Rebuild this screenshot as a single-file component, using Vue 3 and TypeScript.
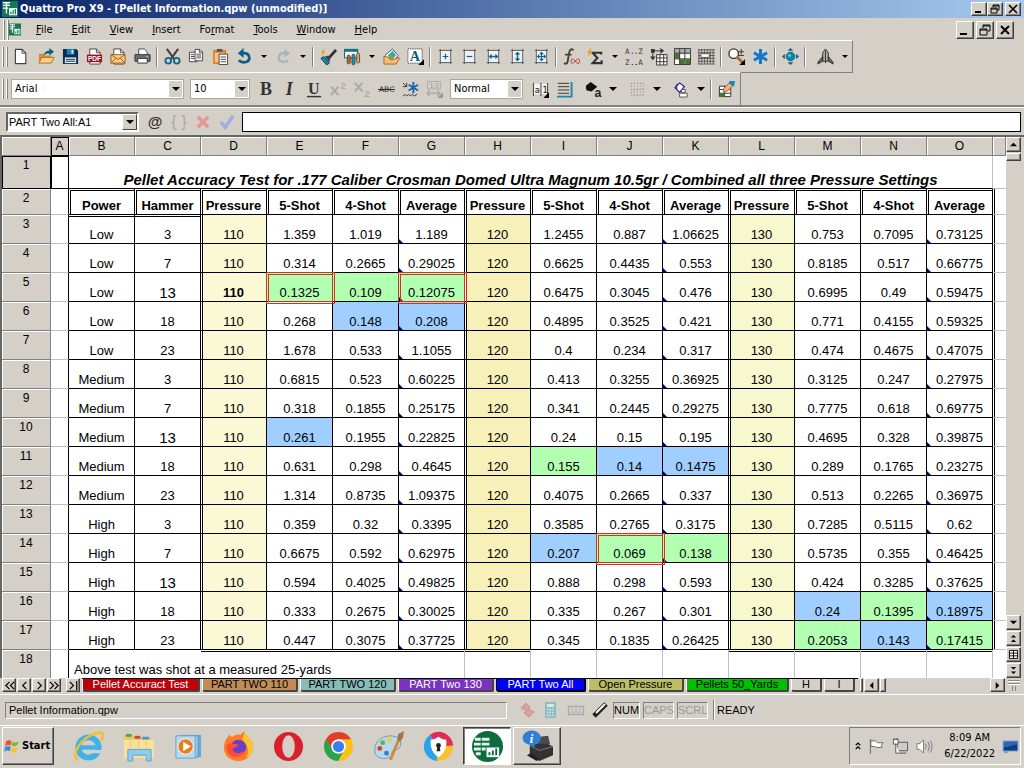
<script setup lang="ts">
import { ref } from 'vue'

interface Tool {
  kind: 'icon' | 'drop' | 'sep' | 'gap'
  icon?: string
  label?: string
}

const t = (icon: string, label: string): Tool => ({ kind: 'icon', icon, label })
const drop = (label: string): Tool => ({ kind: 'drop', label })
const sep: Tool = { kind: 'sep' }
const gap: Tool = { kind: 'gap' }

const box = '<rect x="3" y="3" width="12" height="12" fill="#eef2f4"/><path d="M3.500 1V17M14.500 1V17M2 2.500H16M2 15.500H16" stroke="#555" fill="none"/>'
const page = '<path d="M4 1h7l4 4v12H4z" fill="#fff" stroke="#444"/><path d="M11 1v4h4" fill="none" stroke="#444"/>'

const icons: Record<string, string> = {
  create: '<path d="M1.500 1.500h7l4 4v11h-11z" fill="#fff" stroke="#444" stroke-width="1.200"/><path d="M8.500 1.500v4h4" fill="none" stroke="#444"/>',
  open: '<path d="M1 16V6h5l1 2h7v8z" fill="#d98c2b"/><path d="M1 16l3-6h13l-3 6z" fill="#fbd08b" stroke="#b86f1c"/><path d="M6 8c1-4 3-5 6-5V0l5 4-5 4V6c-2-.5-4 0-6 2z" fill="#0f5f85"/>',
  save: '<path d="M1 1h14l2 2v14H1z" fill="#0a2c50"/><rect x="5" y="1" width="8" height="6" fill="#1684b5"/><rect x="10" y="2" width="2" height="4" fill="#cfe6f2"/><rect x="3" y="10" width="12" height="6" fill="#e8f0f4"/><path d="M4 12h10M4 14h10" stroke="#0a2c50"/>',
  pdf: page + '<rect x="1" y="7" width="16" height="8" fill="#9c0f1c"/><text x="2" y="14" font-size="7" font-weight="700" font-family="Liberation Sans,sans-serif" fill="#fff">PDF</text>',
  mail: page + '<path d="M1 7h15v9H1z" fill="#f8c987" stroke="#9d5b17"/><path d="M1 7l7.500 5L16 7M1 16l5-5M16 16l-5-5" fill="none" stroke="#9d5b17"/>',
  print: '<path d="M5 8V1h6l3 3v4" fill="#fff" stroke="#444"/><path d="M1 7h16v7H1z" fill="#66737a" stroke="#333"/><path d="M4 11h10v5H4z" fill="#fff" stroke="#333"/><path d="M13 9h2" stroke="#7bf27b" stroke-width="1.500"/>',
  cut: '<path d="M3 1l8 11M15 1L7 12" stroke="#444" stroke-width="2.200"/><circle cx="4.500" cy="13.500" r="3" fill="none" stroke="#14638c" stroke-width="2"/><circle cx="13.500" cy="13.500" r="3" fill="none" stroke="#14638c" stroke-width="2"/>',
  copy: '<path d="M1.500 4.500h8v10h-8z" fill="#fff" stroke="#444"/><path d="M3 7h4M3 9h4M3 11h4" stroke="#444"/><path d="M7.500 1.500h5l3 3v9h-8z" fill="#fff" stroke="#444"/><path d="M12 1.500v3h3.500M9 6.500h5M9 8.500h5M9 10.500h5" stroke="#444" fill="none"/>',
  paste: '<path d="M1 2h14v15H1z" fill="#e0872c"/><path d="M5 1h6v3H5z" fill="#555"/><path d="M3 5h10v10H3z" fill="#f6c38a"/><path d="M7.500 6.500h9v11h-9z" fill="#fff" stroke="#444"/><path d="M9 9.500h6M9 12h6M9 14.500h6" stroke="#444"/>',
  undo: '<path d="M3 13c4 4 12 2 11-3.500C13.500 6 10 5 6 5.500" fill="none" stroke="#0f5d85" stroke-width="3"/><path d="M8 0L2 5.500l6 5z" fill="#0f5d85"/>',
  redo: '<path d="M14 13c-3 3-11 2-10-3.500C5 6 8 5 11 5.500" fill="none" stroke="#aab4b8" stroke-width="2.500"/><path d="M10 1l6 4.500-6 4.500z" fill="#aab4b8"/>',
  brush: '<path d="M17 2L9 11" stroke="#333" stroke-width="3"/><path d="M4 9l6 7-3 2-6-7z" fill="#1c87ad" stroke="#0a425b"/><path d="M5 9l4-1 2 3-1 4z" fill="#444"/><path d="M5 0L1 5h2L1 9l5-5H4z" fill="#f29b1c"/>',
  chart: '<path d="M.5 1.500h14v9H.5z" fill="#f6fafb" stroke="#0f5566"/><rect x="0" y="1" width="15" height="3" fill="#167386"/><path d="M3.500 9c0-2 3-2 3 0v7c-1 1-2 1-3 0z" fill="#d4661c" stroke="#444"/><path d="M8.500 8c0-2 3-2 3 0v9c-1 1-2 1-3 0z" fill="#1d9aac" stroke="#444"/><path d="M13.500 7c0-2 3-2 3 0v8c-1 1-2 1-3 0z" fill="#f4b25a" stroke="#444"/>',
  picture: '<path d="M2 8l8-7 6 7-6 7z" fill="#fff" stroke="#285a6b"/><path d="M5 8l5-5 4 5-4 4z" fill="#3aa4b8"/><path d="M5 10l3-3 4 4-4 2z" fill="#67b82e"/><path d="M1 17V9h3l5 4 8-3v2l-3 5z" fill="#f6bb76" stroke="#af6517"/>',
  textbox: '<rect x="1" y="1" width="15" height="15" fill="#fff" stroke="#222" stroke-dasharray="1 1"/><text x="3" y="14" font-size="15" font-weight="700" font-family="Liberation Serif,serif" fill="#0b5b86">A</text><path d="M18 12v6h-6z" fill="#000"/>',
  insert: box + '<path d="M9 6v6M6 9h6" stroke="#086089" stroke-width="1.300"/>',
  remove: box + '<path d="M6 9h6" stroke="#086089" stroke-width="1.300"/>',
  fitWidth: box + '<path d="M5 9h8" stroke="#086089" stroke-width="1.500"/><path d="M7 6L4 9l3 3zM11 6l3 3-3 3z" fill="#086089"/>',
  fitHeight: box + '<path d="M9 5v8" stroke="#086089" stroke-width="1.500"/><path d="M6 7l3-3 3 3zM6 11l3 3 3-3z" fill="#086089"/>',
  fitBoth: box + '<path d="M9 5v8M5 9h8" stroke="#086089" stroke-width="1.300"/><path d="M6.500 6.500L9 4l2.500 2.500zM6.500 11.500L9 14l2.500-2.500zM6.500 6.500L4 9l2.500 2.500zM11.500 6.500L14 9l-2.500 2.500z" fill="#086089"/>',
  formula: '<path d="M11 2.500C9 0 7 2 6.500 5L5 14c-.5 3-2.500 3-4 2M2 7h7" stroke="#444" stroke-width="2" fill="none"/><path d="M10 11c-2 2-2 4 0 6M16 11c2 2 2 4 0 6M10.500 11.500l5 5M15.500 11.500l-5 5" stroke="#c92b2b" fill="none"/>',
  sum: '<path d="M15 7V5H6l5 5.500L6 16h9.500v-3" fill="none" stroke="#333" stroke-width="2.300"/><path d="M4 0L0 5h2L1 9l5-5H4z" fill="#f2a01c"/>',
  sort: '<g font-family="DejaVu Sans Mono,monospace" font-size="8" fill="#333"><text x="-1" y="6">A</text><text x="13" y="6">Z</text><text x="-1" y="18">Z</text><text x="13" y="18">A</text></g><path d="M6 5.500h1.500M10 5.500h1.500M6 17.500h1.500M10 17.500h1.500" stroke="#333"/>',
  transpose: '<path d="M3 2v9M3 3h9" stroke="#333" fill="none"/><path d="M0 9l3 4 3-4zM11 0l4 3-4 3zM1 1h4v4H1z" fill="#333"/><path d="M7 7h11v11H7z" fill="#fff" stroke="#333"/><path d="M7 10.500h11M7 14.500h11M10.500 7v11M14.500 7v11" stroke="#333"/>',
  colors: '<path d="M.5.500h17v17H.5z" fill="#fff" stroke="#333"/><path d="M1 1h16v5H1z" fill="#a9adab"/><path d="M1 6h5v5H1zM6 12h5v5H6zM12 12h5v5h-5z" fill="#48752a"/><path d="M6 .5v17M11.500.500v17M.5 5.500h17M.5 11.500h17" stroke="#333"/>',
  grid: '<path d="M1 1v16M4 1v16M7 1v16M10 1v16M13 1v16M16 1v16M0 2h18M0 5h18M0 8h18M0 11h18M0 14h18M0 17h18" stroke="#444" stroke-width=".8"/><path d="M3 6h9v4H3z" fill="#fff" stroke="#555"/>',
  zoom: '<circle cx="6" cy="6" r="5" fill="#fff" stroke="#333" stroke-width="1.400"/><path d="M9 9l7 7" stroke="#b36b2b" stroke-width="3"/><path d="M14 1v6M11 4h6M11 8h6" stroke="#333"/><path d="M18 12v6h-6z" fill="#000"/>',
  star: '<path d="M9 1v16M2 5l14 8M16 5L2 13" stroke="#1478c8" stroke-width="3.200"/>',
  navigate: '<circle cx="9" cy="9" r="4.500" fill="#0e86ad" stroke="#0b5f80"/><circle cx="8" cy="8" r="1.500" fill="#6cd0e6"/><path d="M6 3l3-3 3 3zM6 15l3 3 3-3zM3 6L0 9l3 3zM15 6l3 3-3 3z" fill="#0d5f7d"/>',
  rocket: '<path d="M6 14V5l3-4 3 4v9z" fill="#aaa" stroke="#333"/><path d="M6 9l-5 6v2l5-3zM12 9l5 6v2l-5-3z" fill="#666" stroke="#333"/><path d="M9 3v13" stroke="#333"/>',
  bold: '<text x="2" y="15" font-size="19" font-weight="700" font-family="Liberation Serif,serif" fill="#333">B</text>',
  italic: '<text x="4" y="15" font-size="19" font-weight="700" font-style="italic" font-family="Liberation Serif,serif" fill="#333">I</text>',
  underline: '<text x="2" y="14" font-size="17" font-weight="700" font-family="Liberation Serif,serif" fill="#333">U</text><path d="M1 16.500h15" stroke="#333" stroke-width="1.500"/>',
  superscript: '<path d="M1 6l8 9M9 6l-8 9" stroke="#aaa" stroke-width="2.200"/><text x="11" y="8" font-size="10" font-weight="700" font-family="Liberation Sans,sans-serif" fill="#aaa">2</text>',
  subscript: '<path d="M1 2l8 9M9 2l-8 9" stroke="#aaa" stroke-width="2.200"/><text x="11" y="17" font-size="10" font-weight="700" font-family="Liberation Sans,sans-serif" fill="#aaa">2</text>',
  strike: '<text x="1" y="12" font-size="8" font-family="DejaVu Sans,sans-serif" fill="#222">ABC</text><path d="M0 9h18" stroke="#222"/>',
  quick: '<path d="M12 1v12M7 4l10 6M17 4L7 10" stroke="#1766ad" stroke-width="2"/><path d="M1 2l4 4M5 2v4H1" stroke="#333" fill="none"/><path d="M1 16l2-2 2 2 2-2 2 2 2-2 2 2 3-2" stroke="#333" fill="none"/>',
  decimals: '<path d="M1.500.500h14v8h-14z" fill="none" stroke="#aaa"/><text x="4" y="7" font-size="7" font-family="Liberation Sans,sans-serif" fill="#999">1.0</text><path d="M1 13h14M4 10l-3 3 3 3M12 10l3 3-3 3" fill="none" stroke="#aaa" stroke-width="1.500"/><path d="M18 12v6h-6z" fill="#999"/>',
  align: '<rect x="2" y="3" width="15" height="11" fill="#f4f4f4"/><path d="M1.500 2v14M9.500 2v14M16.500 2v12" stroke="#333" fill="none"/><text x="3" y="13" font-size="9" font-family="DejaVu Sans,sans-serif" fill="#111">a</text><text x="11" y="13" font-size="9" font-family="DejaVu Sans,sans-serif" fill="#111">1</text><path d="M18 12v6h-6z" fill="#000"/>',
  lines: '<path d="M2 2.500h12M2 6h12M2 9.500h12M2 13h12" stroke="#333"/><path d="M16.500 1v15.500H1" stroke="#148aac" stroke-width="2" fill="none"/>',
  fill: '<path d="M1 5l5-4 7 5-6 5-5-1z" fill="#111"/><path d="M1 5v5l2-4z" fill="#111"/><text x="10" y="17" font-size="13" font-weight="700" font-family="Liberation Sans,sans-serif" fill="#222">a</text>',
  borders: '<path d="M2.500 2.500h13v13h-13zM9 2v14M2 9h14M5.500 2v14M12.500 2v14" stroke="#888" stroke-dasharray="1 2" fill="none"/>',
  shapeFill: '<path d="M2 7l5-5 5 4-5 6z" fill="#fff" stroke="#14148a" stroke-width="1.200"/><path d="M4 3v6" stroke="#14148a"/><path d="M9 9h4v3H9zM7 13h8v4H7z" fill="#fff" stroke="#555"/>',
  styleBrush: '<path d="M1.500 5.500h12v11h-12z" fill="#fff" stroke="#333"/><path d="M1 9h12M1 13h12M7 5v12" stroke="#333"/><path d="M2 13h5v4H2z" fill="#48752a"/><path d="M6 8l6-6 4 2-5 6-5 2z" fill="#efb281" stroke="#a85f2c"/><path d="M12 0h6l-1 6-5-3z" fill="#148aac"/>',
  appLogo: '<rect width="18" height="18" fill="#0e7b50"/><path d="M1 2h8M1 5h8M1 8h6M5 1v13" stroke="#fff" stroke-width="1.500"/><path d="M8 8h9v8H8z" fill="#fff"/><path d="M10 15v-3M12.500 15v-5M15 15V9" stroke="#0e7b50" stroke-width="1.400"/>',
}

const standardTools: Tool[] = [
  t('create', 'New'), t('open', 'Open'), t('save', 'Save'), t('pdf', 'Publish to PDF'), t('mail', 'Send'), t('print', 'Print'), sep,
  t('cut', 'Cut'), t('copy', 'Copy'), t('paste', 'Paste'), t('undo', 'Undo'), drop('Undo list'), t('redo', 'Redo'), drop('Redo list'), sep,
  t('brush', 'QuickFormat'), t('chart', 'Chart'), drop('Chart types'), t('picture', 'Insert picture'), t('textbox', 'Text box'), sep,
  t('insert', 'Insert cells'), t('remove', 'Delete cells'), t('fitWidth', 'Fit width'), t('fitHeight', 'Fit height'), t('fitBoth', 'Fit both'), sep,
  t('formula', 'Formula composer'), t('sum', 'QuickSum'), drop('QuickSum list'), t('sort', 'Sort'), t('transpose', 'Transpose'), t('colors', 'SpeedFormat'), t('grid', 'Grid'), sep,
  t('zoom', 'Zoom'), t('star', 'Perfect Expert'), sep, t('navigate', 'Navigate'), sep, gap, t('rocket', 'Launcher'), drop('Launcher list'),
]
const fontTools: Tool[] = [
  t('bold', 'Bold'), t('italic', 'Italic'), t('underline', 'Underline'), t('superscript', 'Superscript'),
  t('subscript', 'Subscript'), t('strike', 'Strikethrough'), t('quick', 'QuickStyle'), t('decimals', 'Decimals'),
]
const cellTools: Tool[] = [
  t('align', 'Align'), t('lines', 'Lines'), gap, t('fill', 'Fill color'), drop('Fill colors'), gap, t('borders', 'Borders'), drop('Border list'), gap,
  t('shapeFill', 'Shape fill'), drop('Shape fills'), sep, t('styleBrush', 'Format brush'),
]

const menus = [
  ['', 'F', 'ile'], ['', 'E', 'dit'], ['', 'V', 'iew'], ['', 'I', 'nsert'], ['Fo', 'r', 'mat'], ['', 'T', 'ools'], ['', 'W', 'indow'], ['', 'H', 'elp'],
]

const letters = 'ABCDEFGHIJKLMNO'.split('')
const headings = ['Power', 'Hammer', 'Pressure', '5-Shot', '4-Shot', 'Average', 'Pressure', '5-Shot', '4-Shot', 'Average', 'Pressure', '5-Shot', '4-Shot', 'Average']
const power = ['Low', 'Medium', 'High']
const hammer = ['3', '7', '13', '18', '23']
const shots = [
  '1.359 1.019 1.189 1.2455 0.887 1.06625 0.753 0.7095 0.73125',
  '0.314 0.2665 0.29025 0.6625 0.4435 0.553 0.8185 0.517 0.66775',
  '0.1325 0.109 0.12075 0.6475 0.3045 0.476 0.6995 0.49 0.59475',
  '0.268 0.148 0.208 0.4895 0.3525 0.421 0.771 0.4155 0.59325',
  '1.678 0.533 1.1055 0.4 0.234 0.317 0.474 0.4675 0.47075',
  '0.6815 0.523 0.60225 0.413 0.3255 0.36925 0.3125 0.247 0.27975',
  '0.318 0.1855 0.25175 0.341 0.2445 0.29275 0.7775 0.618 0.69775',
  '0.261 0.1955 0.22825 0.24 0.15 0.195 0.4695 0.328 0.39875',
  '0.631 0.298 0.4645 0.155 0.14 0.1475 0.289 0.1765 0.23275',
  '1.314 0.8735 1.09375 0.4075 0.2665 0.337 0.513 0.2265 0.36975',
  '0.359 0.32 0.3395 0.3585 0.2765 0.3175 0.7285 0.5115 0.62',
  '0.6675 0.592 0.62975 0.207 0.069 0.138 0.5735 0.355 0.46425',
  '0.594 0.4025 0.49825 0.888 0.298 0.593 0.424 0.3285 0.37625',
  '0.333 0.2675 0.30025 0.335 0.267 0.301 0.24 0.1395 0.18975',
  '0.447 0.3075 0.37725 0.345 0.1835 0.26425 0.2053 0.143 0.17415',
]
const rows = shots.map((line, i) => {
  const s = line.split(' ')
  return {
    n: i + 3,
    cells: [power[Math.floor(i / 5)], hammer[i % 5], '110', ...s.slice(0, 3), '120', ...s.slice(3, 6), '130', ...s.slice(6, 9)],
  }
})

const green = ['E5', 'F5', 'G5', 'I11', 'J14', 'K14', 'N16', 'M17', 'O17']
const blue = ['F6', 'G6', 'E10', 'J11', 'K11', 'I14', 'M16', 'O16', 'N17']
const ringed = ['E5', 'G5', 'J14']
const large = ['C5', 'C10', 'C15']

function cellClass(col: number, row: number) {
  const letter = letters[col + 1]
  const ref = letter + row
  return {
    ['p' + letter]: 'DHL'.includes(letter),
    split: 'DHL'.includes(letter),
    under: row === 3 && col < 2,
    calc: 'GKO'.includes(letter),
    green: green.includes(ref),
    blue: blue.includes(ref),
    ringed: ringed.includes(ref),
    large: large.includes(ref),
    strong: ref === 'D5',
  }
}

const tabs = [
  { name: 'Pellet Accuract Test', tone: 'red', w: 'w118' },
  { name: 'PART TWO 110', tone: 'tan', w: 'w96' },
  { name: 'PART TWO 120', tone: 'teal', w: 'w96' },
  { name: 'PART Two 130', tone: 'violet', w: 'w96' },
  { name: 'PART Two All', tone: 'active', w: 'w90' },
  { name: 'Open Pressure', tone: 'olive', w: 'w96' },
  { name: 'Pellets 50_Yards', tone: 'lime', w: 'w103' },
  { name: 'H', tone: 'plain', w: 'w31' },
  { name: 'I', tone: 'plain', w: 'w31' },
]
const tabNav = [
  { label: 'First sheets', d: 'M6 2L2 6l4 4M11 2L7 6l4 4' },
  { label: 'Previous sheet', d: 'M8 2L4 6l4 4' },
  { label: 'Next sheet', d: 'M4 2l4 4-4 4' },
  { label: 'Last sheets', d: 'M1 2l4 4-4 4M6 2l4 4-4 4' },
  { label: 'Last tab', d: 'M2 2l4 4-4 4M9.500 1v10' },
]

const taskApps: { name: string; svg: string; state?: string }[] = [
  { name: 'Internet Explorer', svg: '<circle cx="16" cy="17" r="10.500" fill="none" stroke="#3fb2ea" stroke-width="6"/><path d="M8 17h18" stroke="#3fb2ea" stroke-width="4.500"/><path d="M20 19.500h11v3.500H18z" fill="#d4d0c8"/><path d="M5 30C-2 25 6 12 17 5c7-4 14-5 14-1 0 2-1 4-2 6" fill="none" stroke="#f3c02c" stroke-width="2.500"/>' },
  { name: 'Explorer', svg: '<path d="M1 4h10l2 3h17v21H1z" fill="#e6c76a"/><path d="M3 3h6v3H3z" fill="#4ea84e"/><path d="M12 5h6v3h-6z" fill="#c94e3a"/><path d="M20 6h7v3h-7z" fill="#4a8fd0"/><path d="M1 9h31v19H1z" fill="#f8e29a"/><path d="M8 9v11M16 9v10M24 9v11" stroke="#e9cd7b"/><path d="M5 31V19h24v12h-5v-6H10v6z" fill="#8fcbee" stroke="#5fa5d2"/>' },
  { name: 'Media Player', svg: '<path d="M9 4h20v23H9z" fill="#6ba8d4"/><path d="M6 5h20v22H6z" fill="#9ccbe8" stroke="#5a95c2"/><path d="M3 5h20v23H3z" fill="#b5d9f0" stroke="#6aa3cc"/><circle cx="13" cy="16" r="8" fill="#ee7b1c" stroke="#fff"/><path d="M10.500 11l8 5-8 5z" fill="#fff"/>' },
  { name: 'Firefox', svg: '<path d="M3 9c2-3 3-5 4-6 0 2 1 3 3 3 2-2 5-3 8-2 1-1 2-2 4-4 1 6 8 7 9 15 0 9-6 16-15 16S1 25 1 17c0-3 1-6 2-8z" fill="#ff7b25"/><path d="M22 1c2 5 9 8 9 15 0 6-3 10-7 12 4-7 1-15-4-19z" fill="#ffc62b"/><circle cx="16" cy="17" r="8" fill="#6a3fc8"/><path d="M4 14c5-3 7 0 12 0-1 4-6 2-6 6 3 4 9 3 12 0-2 9-15 9-18 0z" fill="#ff4b3a"/>' },
  { name: 'Opera', svg: '<ellipse cx="16" cy="16" rx="15" ry="15" fill="#d9202c"/><ellipse cx="16" cy="16" rx="6.500" ry="11.500" fill="#d4d0c8"/>' },
  { name: 'Chrome', svg: '<circle cx="16" cy="16" r="15" fill="#fbc116"/><path d="M16 16L9 12 3 8.500A15 15 0 0 0 15.500 31L22 19.500z" fill="#2ba24c"/><path d="M3 8.500A15 15 0 0 1 29 8.500H16L10 18z" fill="#e33b2e"/><circle cx="16" cy="16" r="7.500" fill="#fff"/><circle cx="16" cy="16" r="5.800" fill="#3b7ded"/>' },
  { name: 'Paint', svg: '<path d="M2 22C0 13 8 5 18 5c9 0 12 6 10 11-1 3-5 3-7 4-3 2 0 5-4 7-6 3-14 1-15-5z" fill="#b9d8ea" stroke="#6d9ab5"/><circle cx="7" cy="18" r="2.500" fill="#d64031"/><circle cx="10" cy="12" r="2.500" fill="#6bb341"/><circle cx="17" cy="9" r="2.500" fill="#f3ce3a"/><circle cx="14" cy="23" r="2.500" fill="#4178c4"/><path d="M18 30L27 8" stroke="#dc8637" stroke-width="3"/><path d="M25 9l1-6 6-3-1 7-3 4z" fill="#a97342"/>' },
  { name: 'Secure Browser', svg: '<circle cx="16" cy="16" r="15" fill="#fbc02d"/><path d="M16 16L7 4A15 15 0 0 1 31 15z" fill="#e02b56"/><path d="M16 16L7 4A15 15 0 0 0 14 31z" fill="#27a3f0"/><path d="M16 6c3 2 5 3 8 3 1 8-2 14-8 18-6-4-9-10-8-18 3 0 5-1 8-3z" fill="#fff"/><circle cx="16" cy="15" r="2.500" fill="#222"/><path d="M15 15h2l1 6h-4z" fill="#222"/>' },
  { name: 'Quattro Pro', state: 'pressed', svg: '<circle cx="16" cy="16" r="16" fill="#0c6b3f"/><path d="M3 7h6v3H3zM10 7h8v3h-8zM2 12h7v3H2zM10 12h8v3h-8zM2 17h7v3H2zM10 17h4v3h-4zM4 22h5v3H4z" fill="#e4f3ea"/><path d="M15 17h13v10H15z" fill="#fff"/><path d="M18 25v-3M21.500 25v-5M25 25v-7" stroke="#0c6b3f" stroke-width="2"/>' },
  { name: 'Printer', state: 'raised', svg: '<path d="M8 15l14-4 10 5v9l-14 6-10-5z" fill="#333"/><path d="M16 13l2-7 9-1 2 9z" fill="#4a4a4a"/><path d="M8 15l10 5 14-4" fill="none" stroke="#777"/><path d="M5 25l10 6 3-2-9-6z" fill="#222"/><ellipse cx="10" cy="7" rx="9.500" ry="7.500" fill="#2f7fd6"/><path d="M9 12l3 6 2-7z" fill="#2f7fd6"/><text x="8" y="12" font-size="13" font-style="italic" font-weight="700" font-family="Liberation Serif,serif" fill="#fff">i</text>' },
]

const font = ref('Arial')
const size = ref('10')
const style = ref('Normal')
const cell = ref('PART Two All:A1')
const formula = ref('')
</script>

<template>
  <div class="desk">
    <header class="title-bar">
      <svg class="logo" viewBox="0 0 18 18" v-html="icons.appLogo"></svg>
      <h1>Quattro Pro X9 - [Pellet Information.qpw (unmodified)]</h1>
      <div class="win-buttons">
        <button class="win" aria-label="Minimize"><svg viewBox="0 0 12 10"><path d="M2 8h6" stroke="#000" stroke-width="2" /></svg></button>
        <button class="win" aria-label="Restore"><svg viewBox="0 0 12 10"><path d="M4 1h6v5H8M4 1v2M4 2h6M2 4h6v5H2zM2 5h6" fill="none" stroke="#000" /></svg></button>
        <button class="win last" aria-label="Close"><svg viewBox="0 0 12 10"><path d="M2 1l8 8M10 1L2 9" stroke="#000" stroke-width="1.600" /></svg></button>
      </div>
    </header>

    <nav class="menu-bar">
      <i class="grip"></i>
      <svg class="logo doc" viewBox="0 0 18 18" v-html="icons.appLogo"></svg>
      <button v-for="m in menus" :key="m[1] + m[2]" class="menu">{{ m[0] }}<u>{{ m[1] }}</u>{{ m[2] }}</button>
      <div class="win-buttons mdi">
        <button class="win" aria-label="Minimize sheet"><svg viewBox="0 0 12 12"><path d="M1 10h7" stroke="#000" stroke-width="2" /></svg></button>
        <button class="win" aria-label="Restore sheet"><svg viewBox="0 0 12 12"><path d="M4 1h7v6H9M4 1v3M4 2h7M1 5h7v6H1zM1 6h7" fill="none" stroke="#000" /></svg></button>
        <button class="win" aria-label="Close sheet"><svg viewBox="0 0 12 12"><path d="M2 2l8 8M10 2l-8 8" stroke="#000" stroke-width="2" /></svg></button>
      </div>
    </nav>

    <div class="tool-row">
      <div class="toolbar">
        <i class="grip"></i>
        <template v-for="(tool, i) in standardTools" :key="i">
          <button v-if="tool.kind === 'icon'" class="tool" :aria-label="tool.label"><svg viewBox="0 0 18 18" v-html="icons[tool.icon!]"></svg></button>
          <button v-else-if="tool.kind === 'drop'" class="caret" :aria-label="tool.label"></button>
          <i v-else :class="tool.kind"></i>
        </template>
      </div>
    </div>

    <div class="tool-row second">
      <div class="toolbar">
        <i class="grip"></i>
        <span class="combo font"><select v-model="font" aria-label="Font"><option>Arial</option></select><i></i></span>
        <span class="combo size"><select v-model="size" aria-label="Font size"><option>10</option></select><i></i></span>
        <button v-for="tool in fontTools" :key="tool.icon" class="tool" :aria-label="tool.label"><svg viewBox="0 0 18 18" v-html="icons[tool.icon!]"></svg></button>
        <span class="combo style"><select v-model="style" aria-label="Style"><option>Normal</option></select><i></i></span>
        <template v-for="(tool, i) in cellTools" :key="i">
          <button v-if="tool.kind === 'icon'" class="tool" :aria-label="tool.label"><svg viewBox="0 0 18 18" v-html="icons[tool.icon!]"></svg></button>
          <button v-else-if="tool.kind === 'drop'" class="caret wide" :aria-label="tool.label"></button>
          <i v-else :class="tool.kind"></i>
        </template>
      </div>
    </div>

    <div class="formula-bar">
      <span class="combo cell"><select v-model="cell" aria-label="Cell address"><option>PART Two All:A1</option></select><i></i></span>
      <button class="fx at" aria-label="Functions">@</button>
      <button class="fx brace" aria-label="Macros">{ }</button>
      <button class="fx" aria-label="Cancel"><svg viewBox="0 0 18 18"><path d="M3 3l12 12M15 3L3 15" stroke="#e39a94" stroke-width="4" /></svg></button>
      <button class="fx" aria-label="Accept"><svg viewBox="0 0 18 18"><path d="M2 9l5 6L16 2" fill="none" stroke="#a3afd8" stroke-width="4" /></svg></button>
      <input v-model="formula" type="text" aria-label="Cell contents" />
    </div>

    <main class="sheet">
      <div class="grid-area">
        <table>
          <colgroup>
            <col class="c-num" /><col class="c-a" /><col v-for="n in 14" :key="n" class="c-data" /><col />
          </colgroup>
          <thead>
            <tr>
              <th></th>
              <th v-for="l in letters" :key="l" :class="{ current: l === 'A' }">{{ l }}</th>
              <th></th>
            </tr>
          </thead>
          <tbody>
            <tr class="first">
              <th class="current">1</th>
              <td class="cursor"></td>
              <td colspan="14" class="caption">Pellet Accuracy Test for .177 Caliber Crosman Domed Ultra Magnum 10.5gr / Combined all three Pressure Settings</td>
              <td class="free"></td>
            </tr>
            <tr class="heads">
              <th>2</th>
              <td class="edge"></td>
              <td v-for="(h, i) in headings" :key="i" class="head">{{ h }}</td>
              <td class="free close"></td>
            </tr>
            <tr v-for="r in rows" :key="r.n">
              <th>{{ r.n }}</th>
              <td class="edge"></td>
              <td v-for="(c, i) in r.cells" :key="i" :class="cellClass(i, r.n)">{{ c }}</td>
              <td class="free close"></td>
            </tr>
            <tr>
              <th>18</th>
              <td class="edge"></td>
              <td colspan="2" class="note">Above test was shot at a measured 25-yards</td>
              <td colspan="4" class="free under"></td>
              <td class="free under"></td>
              <td v-for="n in 3" :key="n" class="free"></td>
              <td v-for="n in 4" :key="'b' + n" class="free under"></td>
              <td class="free"></td>
            </tr>
          </tbody>
        </table>
      </div>
      <div class="vscroll">
        <button class="sb" aria-label="Scroll up"><svg viewBox="0 0 10 10"><path d="M1 7l4-4 4 4z" /></svg></button>
        <span class="thumb"></span>
        <span class="track"></span>
        <button class="sb" aria-label="Scroll down"><svg viewBox="0 0 10 10"><path d="M1 3l4 4 4-4z" /></svg></button>
        <button class="sb" aria-label="Page up"><svg viewBox="0 0 10 10"><path d="M2 4l3-3 3 3zM2 9l3-3 3 3z" /></svg></button>
        <button class="sb" aria-label="Browse by"><svg viewBox="0 0 10 10"><path d="M.5.500h9v9h-9zM.5 3.500h9M.5 6.500h9M5 0v10" fill="#fff" stroke="#000" /></svg></button>
        <button class="sb" aria-label="Page down"><svg viewBox="0 0 10 10"><path d="M2 1l3 3 3-3zM2 6l3 3 3-3z" /></svg></button>
      </div>
    </main>

    <div class="tab-row">
      <div class="tab-nav">
        <button v-for="b in tabNav" :key="b.label" class="sb" :aria-label="b.label"><svg viewBox="0 0 12 12"><path :d="b.d" fill="none" stroke="#000" stroke-width="1.300" /></svg></button>
      </div>
      <div class="tabs">
        <button v-for="tab in tabs" :key="tab.name" class="tab" :class="[tab.tone, tab.w]">{{ tab.name }}</button>
      </div>
      <div class="hscroll">
        <span class="thumb slim"></span>
        <button class="sb" aria-label="Scroll left"><svg viewBox="0 0 10 10"><path d="M7 1L3 5l4 4z" /></svg></button>
        <span class="thumb"></span>
        <span class="track"></span>
        <button class="sb" aria-label="Scroll right"><svg viewBox="0 0 10 10"><path d="M3 1l4 4-4 4z" /></svg></button>
      </div>
      <svg class="corner" viewBox="0 0 14 14"><path d="M1 2.500h12M1 5.500h12M5.500 8v5M8.500 8v5" stroke="#888" /><path d="M1 3.500h12M1 6.500h12" stroke="#fff" /></svg>
    </div>

    <footer class="status">
      <span class="file">Pellet Information.qpw</span>
      <svg viewBox="0 0 16 16"><path d="M1 6l5-5 4 4-2 2 6 3-5 5-5-4 3-2z" fill="#d9a39f" stroke="#cf8d88" /></svg>
      <svg viewBox="0 0 16 16"><path d="M3 0h11v16H3z" fill="#8fbcc4" /><path d="M5 2h7v3H5z" fill="#d6e8ea" /><path d="M5 7.500h7M5 10.500h7M5 13.500h7" stroke="#d6e8ea" stroke-width="1.500" stroke-dasharray="1.500 1" /></svg>
      <svg class="wide" viewBox="0 0 18 16"><path d="M1.500 4.500h15v8h-15z" fill="none" stroke="#aaa" stroke-width="1.500" /><path d="M4 7.500h2M8 7.500h2M12 7.500h2M4 10h10" stroke="#aaa" /></svg>
      <svg viewBox="0 0 16 16"><path d="M2 14L14 2" stroke="#222" stroke-width="5" /><path d="M4 11l9-9" stroke="#fff" stroke-width="2" /></svg>
      <span class="key on">NUM</span><span class="key">CAPS</span><span class="key">SCRL</span>
      <i class="sep"></i>
      <span class="ready">READY</span>
    </footer>

    <div class="taskbar">
      <button class="start">
        <svg viewBox="0 0 16 16"><path d="M1 3c2-2 4-2 6-1L6 7C4 6 2 6 0 8z" fill="#e8542a" /><path d="M8 3c2 1 4 1 7-1l-2 5c-2 1-4 1-6 0z" fill="#7ebb2e" /><path d="M0 9c2-2 4-1 6-1l-1 5c-2-1-4-1-6 1z" fill="#3a86d8" /><path d="M7 9c2 1 4 1 6 0l-1 5c-2 1-4 1-6-1z" fill="#f7c428" /></svg>
        Start
      </button>
      <button v-for="a in taskApps" :key="a.name" class="app" :class="a.state" :aria-label="a.name"><svg viewBox="0 0 32 32" v-html="a.svg"></svg></button>
      <div class="tray">
        <svg class="small" viewBox="0 0 8 12"><path d="M1 5l3-3 3 3M1 10l3-3 3 3" fill="none" stroke="#000" stroke-width="1.500" /></svg>
        <svg viewBox="0 0 18 18"><path d="M2.500 1v16M3 3h5l2 2h6l-2 3 1 2H9L7 9H3z" fill="#fff" stroke="#666" /></svg>
        <svg viewBox="0 0 18 18"><path d="M5.500 4.500h11v9h-11zM8 16h7" fill="#ccc" stroke="#555" /><path d="M1.500 1.500h5v5h-5zM4 6v10h4M2.500 0v2M5.500 0v2" fill="#fff" stroke="#555" /></svg>
        <svg viewBox="0 0 18 18"><path d="M1 6h3l4-4v14l-4-4H1z" fill="#fff" stroke="#777" /><path d="M10 6c1 2 1 4 0 6M12.500 4c2 3 2 7 0 10M15 2.500c2.500 4 2.500 9 0 13" fill="none" stroke="#777" /></svg>
        <time>8:09 AM<br />6/22/2022</time>
        <svg viewBox="0 0 18 18"><path d="M1 3h16v11H1z" fill="#2b67b8" stroke="#9ab8d8" /><path d="M2 10c5 0 9-3 14-3v6H2z" fill="#123c7c" /><path d="M2 14h4v2H2z" fill="#66a8d8" /></svg>
      </div>
    </div>
  </div>
</template>

<style>
body { margin: 0; background: #fff; }
</style>

<style scoped>
* { box-sizing: border-box; }
.desk {
  margin-right: 7px;
  background: #d4d0c8;
  color: #000;
  font: 11px/16px "DejaVu Sans Condensed", "DejaVu Sans", sans-serif;
  overflow: hidden;
}
button, select, input { font: inherit; color: inherit; margin: 0; padding: 0; border: 0; background: none; border-radius: 0; }
svg { display: block; flex: none; overflow: visible; }

.title-bar { display: flex; align-items: center; height: 18px; padding: 0 3px 0 2px; gap: 2px; background: linear-gradient(90deg, #0a246a, #a6caf0); color: #fff; }
h1 { margin: 0; flex: 1; font: bold 11px/16px "DejaVu Sans Condensed", "DejaVu Sans", sans-serif; white-space: nowrap; }
.logo { width: 16px; height: 16px; }
.win-buttons { display: flex; margin-left: auto; }
.win, .sb { display: flex; align-items: center; justify-content: center; background: #d4d0c8; border: 1px solid; border-color: #fff #404040 #404040 #fff; box-shadow: inset -1px -1px #808080; }
.win { width: 16px; height: 14px; }
.win svg { width: 12px; height: 10px; }
.win.last { margin-left: 2px; }

.menu-bar { display: flex; align-items: center; height: 22px; padding: 1px 0 0 3px; }
.grip { width: 5px; height: 20px; border: solid #fff; border-width: 0 1px; box-shadow: 1px 0 #808080, inset 1px 0 #808080; flex: none; }
.doc { width: 12px; height: 15px; margin: 0 13px 0 1px; }
.menu { padding: 0 2px; margin-right: 15px; }
.mdi { gap: 2px; padding-right: 10px; }
.mdi .win { width: 18px; height: 18px; }
.mdi svg { width: 12px; height: 12px; }

.tool-row { display: flex; }
.tool-row.second { border-bottom: 2px solid #808080; margin-top: -1px; }
.toolbar { display: flex; align-items: center; height: 33px; padding: 0 2px; border: solid #808080; border-width: 1px 1px 0 0; border-top-color: #fff; }
.tool-row:not(.second) .toolbar { border-bottom-width: 1px; padding-right: 0; }
.toolbar .grip { margin-right: 3px; }
.tool { width: 24px; height: 24px; display: flex; align-items: center; justify-content: center; }
.tool svg { width: 17px; height: 17px; }
.caret { width: 15px; height: 24px; display: flex; align-items: center; justify-content: center; }
.caret::before, .combo i::before { content: ""; border: solid transparent; border-width: 4px 4px 0; border-top-color: #000; }
.caret:not(.wide)::before { border-width: 3px 3px 0; }
.sep { width: 6px; height: 20px; background: linear-gradient(#808080, #808080) 2px 0 / 1px 100% no-repeat, linear-gradient(#fff, #fff) 3px 0 / 1px 100% no-repeat; }
.gap { width: 5px; }

.combo { display: grid; background: #fff; border: 1px solid #aca899; height: 20px; }
.combo select { grid-area: 1 / 1; appearance: none; width: 100%; outline: 0; padding-left: 3px; }
.combo i { grid-area: 1 / 1; justify-self: end; width: 15px; background: #d4d0c8; border: 1px solid #fff; display: flex; align-items: center; justify-content: center; pointer-events: none; }
.combo.font { width: 173px; margin: 0 6px 0 1px; }
.combo.size { width: 60px; margin-right: 4px; }
.combo.style { width: 73px; margin: 0 5px 0 4px; }
.combo.cell { width: 133px; height: 20px; border: 2px solid #666; border-right-color: #fff; border-bottom-color: #fff; font: 11px/16px "Liberation Sans", Arial, sans-serif; }
.combo.cell select { padding-left: 1px; }
.cell i { border: 1px solid #444; border-color: #fff #444 #444 #fff; }

.formula-bar { display: flex; align-items: center; height: 28px; padding: 0 3px 0 6px; border-top: 1px solid #fff; }
.fx { width: 24px; height: 20px; display: flex; align-items: center; justify-content: center; }
.fx svg { width: 16px; height: 16px; }
.fx.at { margin-left: 4px; font: bold 15px/18px "Liberation Sans", Arial, sans-serif; color: #333; }
.fx.brace { font: 17px/18px "Liberation Sans", Arial, sans-serif; color: #aaa; white-space: nowrap; }
.formula-bar input { flex: 1; min-width: 0; height: 20px; background: #fff; border: 1px solid #000; margin-left: 3px; outline: 0; }

.sheet { display: flex; border: solid #666; border-width: 2px 0 0 2px; padding-right: 3px; height: 543px; }
.grid-area { flex: 1; min-width: 0; overflow: hidden; background: #fff; }
table { width: 100%; table-layout: fixed; border-collapse: separate; border-spacing: 0; font: 13px/15px "Liberation Sans", Arial, sans-serif; }
.c-num { width: 49px; }
.c-a { width: 18px; }
.c-data { width: 66px; }
td, th { padding: 0; overflow: visible; }
th { font-weight: 400; font-size: 12px; background: #d4d0c8; border: solid #808080; border-width: 0 1px 1px 0; box-shadow: inset 1px 1px #fff; }
thead th { height: 19px; vertical-align: middle; }
tbody th { vertical-align: top; padding-top: 2px; }
th.current { border-color: #000; box-shadow: inset 1px 1px #000; }
tbody tr { height: 29px; }
tbody tr.first { height: 33px; }
tbody tr.heads { height: 26px; }
td { position: relative; vertical-align: bottom; text-align: center; border: solid #000; border-width: 0 1px 1px 0; padding-bottom: 1px; }
.cursor { box-shadow: inset 1px 1px #000; }
.caption { font: italic bold 15px/16px "Liberation Sans", Arial, sans-serif; border-right-color: #c0c0c0; padding: 0; white-space: nowrap; }
.edge { border-bottom-color: #c0c0c0; }
.free { border-color: #c0c0c0; }
.free:last-child { border-right: 0; }
.head { font-weight: 700; box-shadow: inset 1px 1px #fff, inset 2px 2px #000; }
.split, .close { box-shadow: inset 1px 0 #fff, inset 2px 0 #000; }
.under { box-shadow: inset 0 1px #fff, inset 0 2px #000; }
.pD { background: #fbf8d6; }
.pH { background: #f7f0b9; }
.pL { background: #f7f8cd; }
.green { background: #b2ffb2; }
.blue { background: #a0cfff; }
.large { font-size: 15px; }
.strong { font-weight: 700; }
.calc::before { content: ""; position: absolute; left: 0; bottom: 0; border: solid transparent; border-width: 4px 0 0 4px; border-left-color: #000080; }
.ringed::after { content: ""; position: absolute; z-index: 1; inset: -1px -3px -3px -1px; border: 3px double #d3301f; }
.note { text-align: left; padding-left: 5px; border-right: 0; white-space: nowrap; }

.vscroll { width: 15px; display: flex; flex-direction: column; gap: 1px; }
.sb { width: 15px; height: 15px; flex: none; }
.sb svg { width: 9px; height: 9px; }
.thumb { height: 8px; border: 1px solid; border-color: #fff #404040 #404040 #fff; box-shadow: inset -1px -1px #808080; }
.track { flex: 1; }

.tab-row { display: flex; height: 17px; padding: 0 3px 0 2px; align-items: flex-start; border-bottom: 1px solid #fff; }
.tab-nav { display: flex; gap: 1px; padding-right: 2px; }
.tab-nav .sb { width: 14px; height: 14px; }
.tab-nav .sb svg { width: 11px; height: 11px; }
.tab-nav .sb:last-child { margin-left: 4px; }
.tabs { display: flex; gap: 2px; border-top: 1px solid #000; padding-right: 3px; }
.tab { height: 13px; border: solid #444; border-width: 0 2px 2px 1px; border-left-color: #fff; border-radius: 0 0 2px 3px; font: 11px/11px "Liberation Sans", Arial, sans-serif; white-space: nowrap; }
.w118 { width: 118px; }
.w103 { width: 103px; }
.w96 { width: 96px; }
.w90 { width: 90px; }
.w31 { width: 31px; }
.red { background: #c00008; color: #fff; }
.tan { background: #c28c55; }
.teal { background: #84bdb9; }
.violet { background: #7a32c0; color: #fff; }
.active { background: #00f; color: #fff; border-color: #000; }
.olive { background: #bdbd62; }
.lime { background: #00c000; }
.hscroll { flex: 1; display: flex; gap: 1px; padding-left: 2px; }
.hscroll .sb { height: 14px; }
.hscroll .thumb { width: 6px; height: 14px; }
.hscroll .slim { width: 3px; }
.corner { width: 14px; height: 14px; margin-left: 2px; }

.status { display: flex; align-items: center; height: 30px; padding-left: 5px; font: 11px/15px "Liberation Sans", Arial, sans-serif; }
.file { flex: 0 0 502px; height: 17px; padding-left: 3px; border: 1px solid; border-color: #808080 #fff #fff #808080; margin-right: 13px; }
.status svg { width: 16px; height: 16px; margin-right: 6px; }
.status svg.wide { width: 18px; margin: 0 7px 0 3px; }
.key { height: 17px; width: 27px; margin-right: 3px; text-align: center; border: 1px solid; border-color: #808080 #fff #fff #808080; color: #999; }
.key.on { color: #000; margin-left: -1px; }
.key:not(.on) { width: 31px; }
.key + .sep { width: 4px; }
.ready { margin-left: 2px; }

.taskbar { display: flex; align-items: center; height: 43px; border-top: 1px solid #fff; padding: 0 3px 2px 2px; }
.start { display: flex; align-items: center; gap: 2px; width: 52px; height: 38px; margin-right: 9px; padding-left: 2px; border: 1px solid; border-color: #fff #404040 #404040 #fff; box-shadow: inset -1px -1px #808080; font: bold 11px/16px "DejaVu Sans Condensed", "DejaVu Sans", sans-serif; }
.start svg { width: 15px; height: 15px; }
.app { width: 50px; height: 38px; display: flex; align-items: center; justify-content: center; flex: none; }
.app svg { width: 31px; height: 31px; }
.pressed { width: 48px; background: #fff; border: 1px solid; border-color: #404040 #fff #fff #404040; box-shadow: inset 1px 1px #808080; }
.raised { width: 48px; margin-left: 2px; border: 1px solid; border-color: #fff #404040 #404040 #fff; box-shadow: inset -1px -1px #808080; }
.tray { margin-left: auto; display: flex; align-items: center; height: 38px; padding: 0 1px 0 5px; border: 1px solid; border-color: #808080 #fff #fff #808080; gap: 7px; }
.tray svg { width: 17px; height: 17px; }
.tray svg.small { width: 6px; height: 10px; }
time { text-align: center; white-space: nowrap; margin-left: 4px; }
</style>
